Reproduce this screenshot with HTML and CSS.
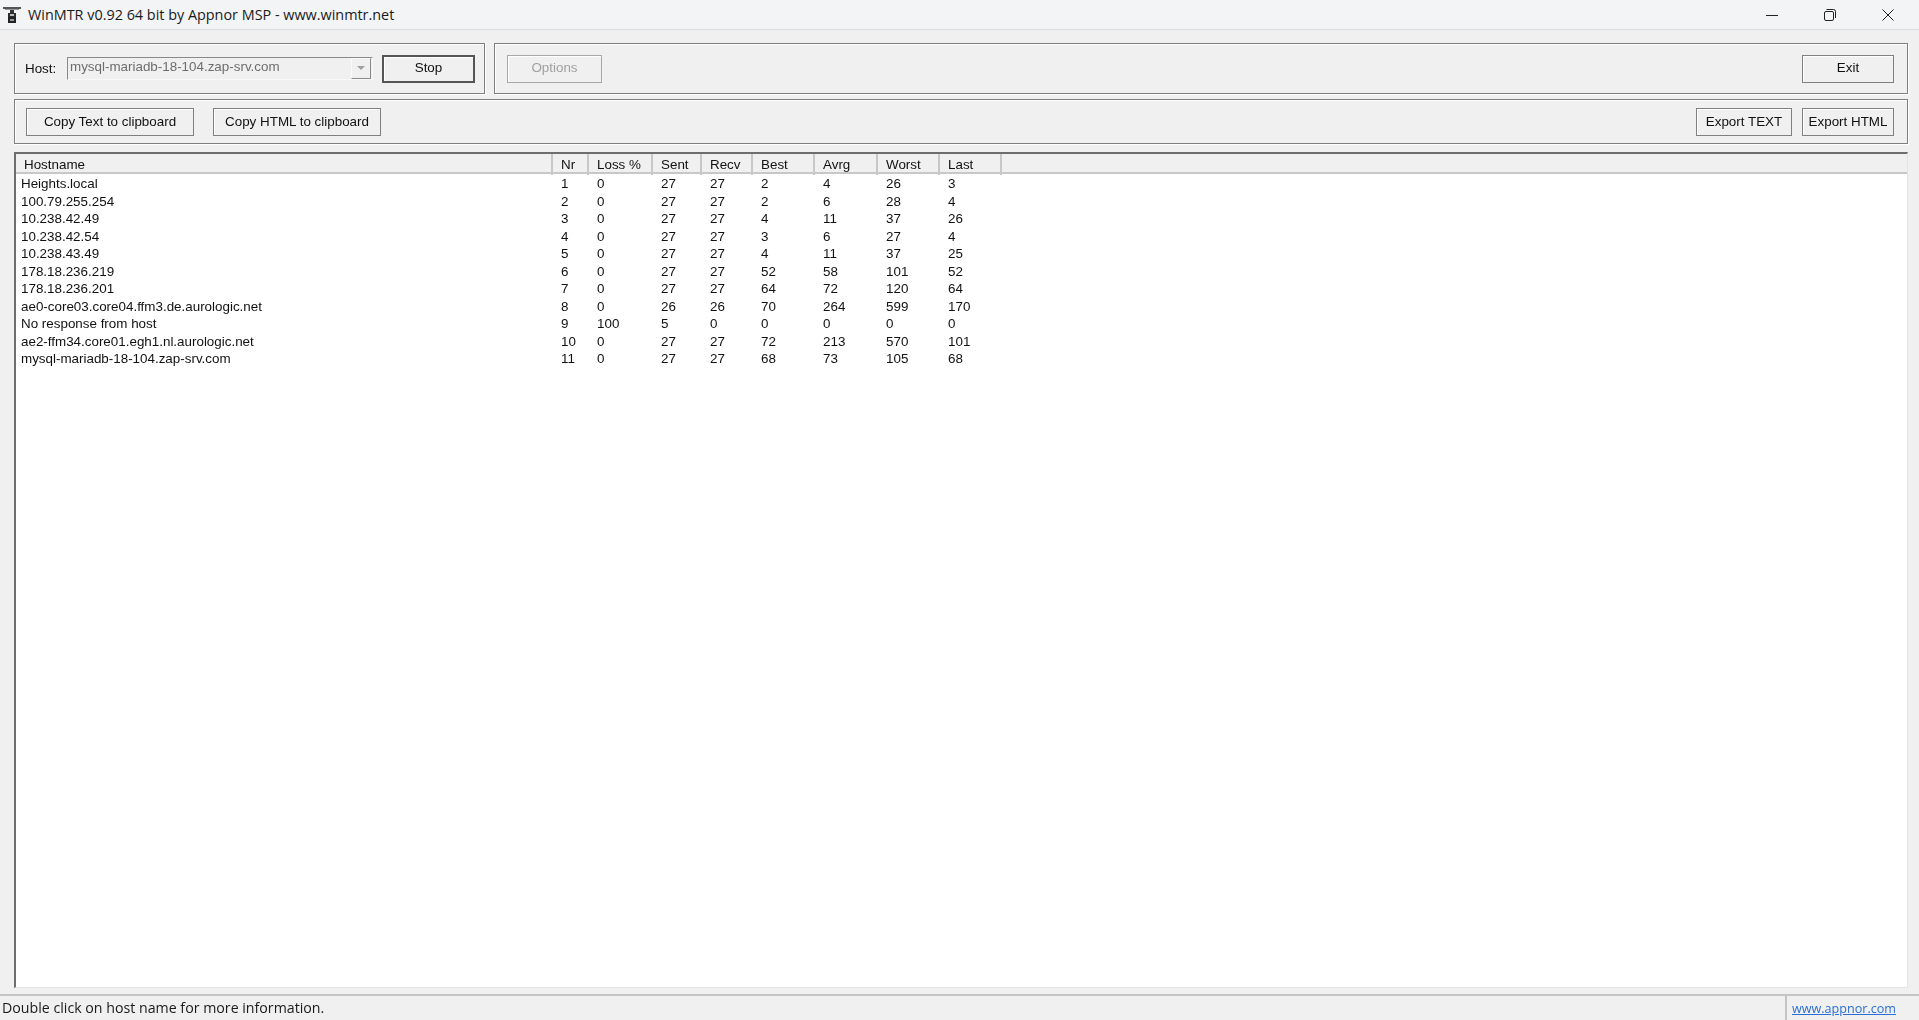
FILE: index.html
```html
<!DOCTYPE html>
<html lang="en">
<head>
  <meta charset="UTF-8" />
  <title>WinMTR v0.92 64 bit by Appnor MSP - www.winmtr.net</title>
  <link rel="stylesheet" href="styles.css">
</head>
<body>
  <div class="titlebar">
    <svg class="app-icon" width="18" height="18" viewBox="0 0 18 18">
      <rect x="0" y="1" width="18" height="2" fill="#555"/>
      <rect x="2" y="3" width="14" height="1" fill="#999"/>
      <rect x="7" y="4" width="4" height="3" fill="#333"/>
      <rect x="5" y="7" width="8" height="4" fill="#2b2b2b"/>
      <rect x="7" y="8" width="4" height="2" fill="#bbb"/>
      <rect x="5" y="11" width="8" height="6" fill="#222"/>
      <rect x="7" y="13" width="4" height="2" fill="#999"/>
    </svg>
    <span class="title-text">WinMTR v0.92 64 bit by Appnor MSP - www.winmtr.net</span>
    <div class="win-controls">
      <svg width="12" height="12" viewBox="0 0 12 12"><path d="M0 6.5H12" stroke="#222" fill="none"/></svg>
      <svg width="12" height="12" viewBox="0 0 12 12"><path d="M2.5 0.5H9.5Q11.5 0.5 11.5 2.5V9M0.5 4Q0.5 2.5 2 2.5H8Q9.5 2.5 9.5 4V10Q9.5 11.5 8 11.5H2Q0.5 11.5 0.5 10Z" stroke="#222" fill="none"/></svg>
      <svg width="12" height="12" viewBox="0 0 12 12"><path d="M0.5 0.5L11.5 11.5M11.5 0.5L0.5 11.5" stroke="#222" fill="none"/></svg>
    </div>
  </div>

  <div class="content">
    <div class="top-row">
      <div class="group host-group">
        <span class="host-label">Host:</span>
        <div class="combo">
          <span class="combo-text">mysql-mariadb-18-104.zap-srv.com</span>
          <span class="combo-btn"><i class="arrow"></i></span>
        </div>
        <button class="btn btn-stop">Stop</button>
      </div>
      <div class="group options-group">
        <button class="btn btn-options" disabled>Options</button>
        <button class="btn btn-wide">Exit</button>
      </div>
    </div>

    <div class="group copy-group">
      <button class="btn btn-copy">Copy Text to clipboard</button>
      <button class="btn btn-copy">Copy HTML to clipboard</button>
      <div class="spacer"></div>
      <button class="btn btn-export">Export TEXT</button>
      <button class="btn btn-wide">Export HTML</button>
    </div>

    <div class="list">
      <div class="list-head">
        <div class="head-cell">Hostname</div>
        <div class="head-cell">Nr</div>
        <div class="head-cell">Loss %</div>
        <div class="head-cell">Sent</div>
        <div class="head-cell">Recv</div>
        <div class="head-cell">Best</div>
        <div class="head-cell">Avrg</div>
        <div class="head-cell">Worst</div>
        <div class="head-cell">Last</div>
      </div>
      <div class="list-body">
        <div class="row"><span>Heights.local</span><span>1</span><span>0</span><span>27</span><span>27</span><span>2</span><span>4</span><span>26</span><span>3</span></div>
        <div class="row"><span>100.79.255.254</span><span>2</span><span>0</span><span>27</span><span>27</span><span>2</span><span>6</span><span>28</span><span>4</span></div>
        <div class="row"><span>10.238.42.49</span><span>3</span><span>0</span><span>27</span><span>27</span><span>4</span><span>11</span><span>37</span><span>26</span></div>
        <div class="row"><span>10.238.42.54</span><span>4</span><span>0</span><span>27</span><span>27</span><span>3</span><span>6</span><span>27</span><span>4</span></div>
        <div class="row"><span>10.238.43.49</span><span>5</span><span>0</span><span>27</span><span>27</span><span>4</span><span>11</span><span>37</span><span>25</span></div>
        <div class="row"><span>178.18.236.219</span><span>6</span><span>0</span><span>27</span><span>27</span><span>52</span><span>58</span><span>101</span><span>52</span></div>
        <div class="row"><span>178.18.236.201</span><span>7</span><span>0</span><span>27</span><span>27</span><span>64</span><span>72</span><span>120</span><span>64</span></div>
        <div class="row"><span>ae0-core03.core04.ffm3.de.aurologic.net</span><span>8</span><span>0</span><span>26</span><span>26</span><span>70</span><span>264</span><span>599</span><span>170</span></div>
        <div class="row"><span>No response from host</span><span>9</span><span>100</span><span>5</span><span>0</span><span>0</span><span>0</span><span>0</span><span>0</span></div>
        <div class="row"><span>ae2-ffm34.core01.egh1.nl.aurologic.net</span><span>10</span><span>0</span><span>27</span><span>27</span><span>72</span><span>213</span><span>570</span><span>101</span></div>
        <div class="row"><span>mysql-mariadb-18-104.zap-srv.com</span><span>11</span><span>0</span><span>27</span><span>27</span><span>68</span><span>73</span><span>105</span><span>68</span></div>
      </div>
    </div>
  </div>

  <div class="statusbar">
    <div class="status-text">Double click on host name for more information.</div>
    <div class="status-link"><a href="#">www.appnor.com</a></div>
  </div>
</body>
</html>
```

FILE: styles.css
```css
* {
  box-sizing: border-box;
}

body {
  margin: 0;
  width: 1919px;
  height: 1020px;
  display: flex;
  flex-direction: column;
  overflow: hidden;
  background: #f0f0f0;
  color: #111;
  font-family: "Liberation Sans", Arial, sans-serif;
  font-size: 13.4px;
  filter: blur(0.35px);
}

.titlebar {
  height: 30px;
  flex: none;
  display: flex;
  align-items: center;
  padding: 0 25px 0 3px;
  background: #f3f4f6;
  border-bottom: 1px solid #dcdcdc;
}

.app-icon {
  flex: none;
}

.title-text {
  margin-left: 7px;
  font-family: "Open Sans", sans-serif;
  font-size: 14.4px;
  color: #1a1a1a;
}

.win-controls {
  margin-left: auto;
  display: flex;
  gap: 46px;
}

.content {
  flex: 1;
  min-height: 0;
  display: flex;
  flex-direction: column;
  padding: 13px 11px 6px 14px;
}

.top-row {
  display: flex;
  gap: 9px;
  height: 51px;
  margin-bottom: 5px;
}

.group {
  display: flex;
  align-items: center;
  border: 1px solid #7f7f7f;
  box-shadow: inset 1px 1px 0 #fff, 1px 1px 0 #fff;
}

.host-group {
  width: 471px;
  padding-left: 10px;
}

.host-label {
  width: 42px;
}

.combo {
  width: 306px;
  height: 23px;
  display: flex;
  justify-content: space-between;
  align-items: center;
  border: 1px solid #f8f8f8;
  border-top-color: #8a8a8a;
  border-left-color: #8a8a8a;
  background: #f0f0f0;
  margin-top: -1px;
  padding-left: 2px;
}

.combo-text {
  color: #6d6d6d;
  margin-top: -3px;
}

.combo-btn {
  width: 20px;
  height: 21px;
  display: flex;
  justify-content: center;
  align-items: center;
  border: 1px solid #8a8a8a;
  border-top-color: #fafafa;
  border-left-color: #fafafa;
  margin-right: 1px;
}

.arrow {
  border-left: 4px solid transparent;
  border-right: 4px solid transparent;
  border-top: 4px solid #a0a0a0;
}

.btn {
  height: 28px;
  padding: 0 0 2px;
  flex: none;
  background: #f0f0f0;
  border: 1px solid #808080;
  box-shadow: inset 1px 1px 0 #fff;
  color: #111;
  font-family: inherit;
  font-size: 13.4px;
}

.btn-stop {
  width: 93px;
  margin-left: 9px;
  border: 2px solid #555;
}

.options-group {
  flex: 1;
  justify-content: space-between;
  padding: 0 13px 0 12px;
}

.btn-options {
  width: 95px;
  color: #a0a0a0;
  border-color: #a8a8a8;
}

.btn-wide {
  width: 92px;
}

.copy-group {
  height: 45px;
  flex: none;
  padding: 0 13px 0 11px;
}

.copy-group .btn {
  padding: 0;
}

.btn-copy {
  width: 168px;
  margin-right: 19px;
}

.spacer {
  flex: 1;
}

.btn-export {
  width: 96px;
  margin-right: 10px;
}

.list {
  flex: 1;
  min-height: 0;
  margin-top: 8px;
  background: #fff;
  border: 1px solid #e4e4e4;
  border-top: 2px solid #6e6e6e;
  border-left: 2px solid #6e6e6e;
}

.list-head,
.row {
  display: grid;
  grid-template-columns: 537px 36px 64px 49px 51px 62px 63px 62px 62px;
}

.list-head {
  height: 20px;
  background: #f0f0f0;
  border-bottom: 2px solid #c8c8c8;
}

.head-cell {
  padding: 1px 0 0 8px;
  line-height: 20px;
  border-right: 2px solid #c8c8c8;
}

.list-body {
  padding-top: 1px;
}

.row {
  height: 17.55px;
  line-height: 17.55px;
  color: #111;
}

.row span {
  padding-left: 8px;
  white-space: nowrap;
}

.row span:first-child {
  padding-left: 5px;
}

.statusbar {
  height: 26px;
  flex: none;
  display: flex;
  border-top: 2px solid #c4c4c4;
  font-family: "Open Sans", sans-serif;
  font-size: 14.2px;
}

.status-text {
  flex: 1;
  padding-left: 2px;
  line-height: 24px;
  color: #1a1a1a;
}

.status-link {
  width: 134px;
  margin-left: 2px;
  padding-left: 5px;
  font-size: 12.6px;
  line-height: 25px;
  border-left: 2px solid #c4c4c4;
}

.status-link a {
  color: #2a6fd6;
}
```
